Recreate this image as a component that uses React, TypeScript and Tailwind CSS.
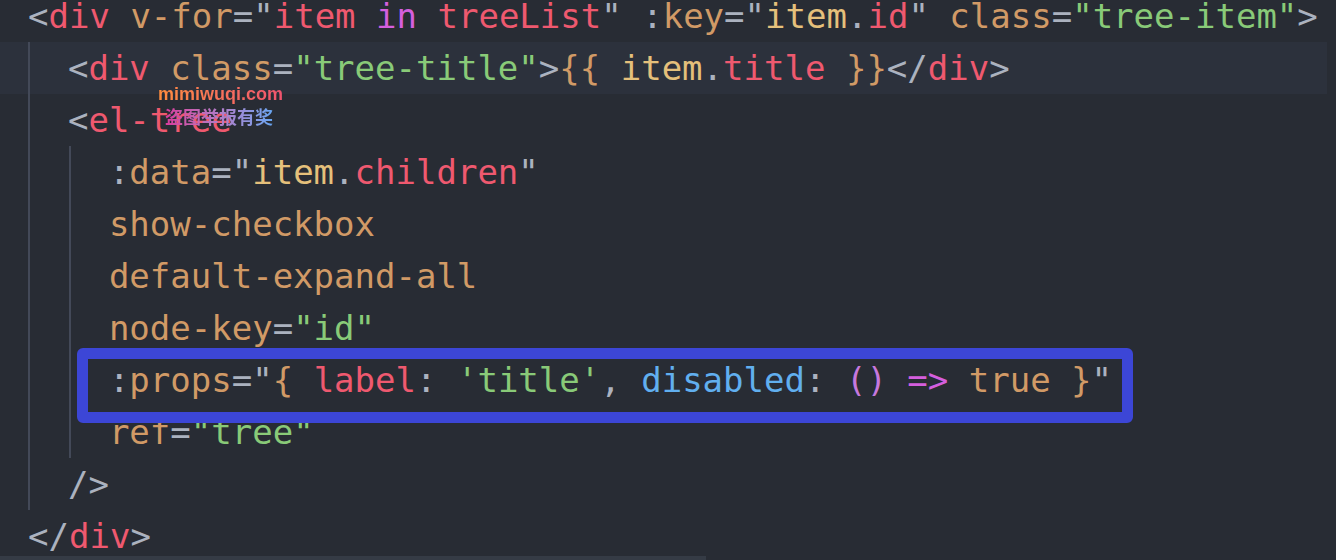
type Tok = [string, string];

const G = "text-[#abb2bf]";
const R = "text-[#ef596f]";
const O = "text-[#d19a66]";
const Y = "text-[#e5c07b]";
const GR = "text-[#89ca78]";
const P = "text-[#d55fde]";
const PL = "text-[#c678dd]";
const B = "text-[#61afef]";

const lines: { indent: number; toks: Tok[]; active?: boolean }[] = [
  {
    indent: 0,
    toks: [
      ["<", G], ["div", R], [" v-for", O], ["=\"", G], ["item", R], [" in", P],
      [" treeList", R], ["\"", G], [" :", G], ["key", O], ["=\"", G], ["item", Y],
      [".", G], ["id", R], ["\"", G], [" class", O], ["=", G], ["\"tree-item\"", GR],
      [">", G],
    ],
  },
  {
    indent: 1,
    active: true,
    toks: [
      ["<", G], ["div", R], [" class", O], ["=", G], ["\"tree-title\"", GR], [">", G],
      ["{{", O], [" item", Y], [".", G], ["title", R], [" }}", O], ["</", G],
      ["div", R], [">", G],
    ],
  },
  { indent: 1, toks: [["<", G], ["el-tree", R]] },
  {
    indent: 2,
    toks: [
      [":", G], ["data", O], ["=\"", G], ["item", Y], [".", G], ["children", R], ["\"", G],
    ],
  },
  { indent: 2, toks: [["show-checkbox", O]] },
  { indent: 2, toks: [["default-expand-all", O]] },
  { indent: 2, toks: [["node-key", O], ["=", G], ["\"id\"", GR]] },
  {
    indent: 2,
    toks: [
      [":", G], ["props", O], ["=\"", G], ["{", O], [" label", R], [":", G],
      [" 'title'", GR], [",", G], [" disabled", B], [":", G], [" ()", PL],
      [" =>", P], [" true", O], [" }", O], ["\"", G],
    ],
  },
  { indent: 2, toks: [["ref", O], ["=", G], ["\"tree\"", GR]] },
  { indent: 1, toks: [["/>", G]] },
  { indent: 0, toks: [["</", G], ["div", R], [">", G]] },
];

export default function App() {
  return (
    <div className="relative h-[560px] w-[1336px] overflow-hidden bg-[#282c34] font-['DejaVu_Sans_Mono',monospace] text-[34px]">
      <div className="-mt-[10px] flex flex-col">
        {lines.map((line, i) => (
          <div
            key={i}
            className={`flex h-[52px] w-[1327px] whitespace-pre pl-[28px] leading-[52px] ${
              line.active ? "bg-[#2c313c]" : ""
            }`}
          >
            {Array.from({ length: line.indent }).map((_, k) => (
              <span key={k} className="h-full w-[2ch] border-l-2 border-[#434958]" />
            ))}
            <span className={line.indent > 0 ? "-ml-[1px]" : ""}>
              {line.toks.map(([t, c], j) => (
                <span key={j} className={c}>
                  {t}
                </span>
              ))}
            </span>
          </div>
        ))}
      </div>

      {/* highlight box */}
      <div className="absolute left-[77px] top-[348px] h-[75px] w-[1056px] rounded-[6px] border-[11px] border-[#3c46d6]" />

      {/* watermark */}
      <div className="absolute left-[158px] top-[84px] flex flex-col items-start">
        <span className="bg-linear-to-r from-[#ff8c3c] to-[#f0536e] bg-clip-text font-['Liberation_Sans',sans-serif] text-[18px] font-semibold leading-[20px] text-transparent">
          mimiwuqi.com
        </span>
        <span className="ml-[7px] mt-[2px] bg-linear-to-r from-[#d83a9c] to-[#66a6f2] bg-clip-text font-['Noto_Sans_CJK_SC',sans-serif] text-[18px] font-bold leading-[20px] text-transparent">
          盗图举报有奖
        </span>
      </div>

      {/* horizontal scrollbar */}
      <div className="absolute bottom-0 left-0 h-[4px] w-[706px] bg-[#353b45]" />
    </div>
  );
}
